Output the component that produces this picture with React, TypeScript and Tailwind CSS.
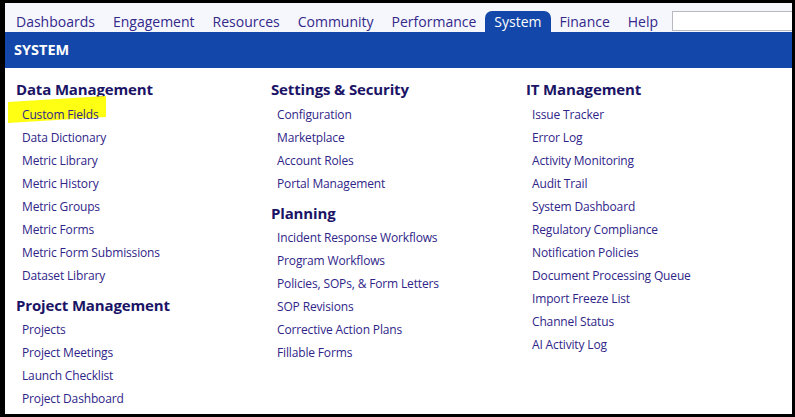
import React from "react";

type Section = { title: string; items: string[] };

const columns: Section[][] = [
  [
    {
      title: "Data Management",
      items: [
        "Custom Fields",
        "Data Dictionary",
        "Metric Library",
        "Metric History",
        "Metric Groups",
        "Metric Forms",
        "Metric Form Submissions",
        "Dataset Library",
      ],
    },
    {
      title: "Project Management",
      items: ["Projects", "Project Meetings", "Launch Checklist", "Project Dashboard"],
    },
  ],
  [
    {
      title: "Settings & Security",
      items: ["Configuration", "Marketplace", "Account Roles", "Portal Management"],
    },
    {
      title: "Planning",
      items: [
        "Incident Response Workflows",
        "Program Workflows",
        "Policies, SOPs, & Form Letters",
        "SOP Revisions",
        "Corrective Action Plans",
        "Fillable Forms",
      ],
    },
  ],
  [
    {
      title: "IT Management",
      items: [
        "Issue Tracker",
        "Error Log",
        "Activity Monitoring",
        "Audit Trail",
        "System Dashboard",
        "Regulatory Compliance",
        "Notification Policies",
        "Document Processing Queue",
        "Import Freeze List",
        "Channel Status",
        "AI Activity Log",
      ],
    },
  ],
];

const navItems = [
  "Dashboards",
  "Engagement",
  "Resources",
  "Community",
  "Performance",
  "System",
  "Finance",
  "Help",
];

function Highlight() {
  return (
    <svg
      className="absolute left-[-14px] top-[-7px] pointer-events-none"
      width="100"
      height="30"
      viewBox="0 0 100 30"
    >
      <polygon points="0,6 98,0 98,21 0,27" fill="#ffff14" />
    </svg>
  );
}

function MenuSection({ section, first }: { section: Section; first: boolean }) {
  return (
    <div className={first ? "" : "mt-[7px]"}>
      <div className="text-[15px] leading-[22px] font-bold text-[#1b1466] tracking-[-0.15px]">
        {section.title}
      </div>
      <ul className={first ? "mt-[3px] pl-[6px]" : "mt-[2px] pl-[6px]"}>
        {section.items.map((item) => (
          <li
            key={item}
            className="relative h-[23px] leading-[23px] text-[12px] tracking-[-0.15px] text-[#2f2588]"
          >
            {item === "Custom Fields" && <Highlight />}
            <span className="relative">{item}</span>
          </li>
        ))}
      </ul>
    </div>
  );
}

export default function App() {
  return (
    <div
      className="w-[795px] h-[417px] bg-black pt-[3px] pr-[3px] pb-[3px] pl-[5px] overflow-hidden"
      style={{ fontFamily: '"Open Sans", "Noto Sans", sans-serif' }}
    >
      <div className="w-full h-full bg-white flex flex-col overflow-hidden">
        {/* top navigation */}
        <div className="h-[29px] bg-[#f6f7fd] flex items-end pl-[2px] shrink-0">
          {navItems.map((n) =>
            n === "System" ? (
              <div
                key={n}
                className="h-[21px] px-[9px] bg-[#1347a9] text-white rounded-t-[7px] text-[14px] leading-[21px]"
              >
                {n}
              </div>
            ) : (
              <div
                key={n}
                className="h-[21px] px-[9px] text-[#33288b] text-[14px] leading-[21px]"
              >
                {n}
              </div>
            )
          )}
          <div className="flex-1 ml-[5px] mr-[-10px] h-[20px] mb-[1px] bg-white border border-[#b8b8c0]" />
        </div>

        {/* section title bar */}
        <div className="h-[36px] bg-[#1347a9] flex items-center pl-[9px] shrink-0">
          <span className="text-white font-bold text-[14.5px]">SYSTEM</span>
        </div>

        {/* menu columns */}
        <div className="flex pl-[11px] pt-[10px]">
          {columns.map((col, i) => (
            <div key={i} className="w-[255px]">
              {col.map((s, j) => (
                <MenuSection key={s.title} section={s} first={j === 0} />
              ))}
            </div>
          ))}
        </div>
      </div>
    </div>
  );
}
